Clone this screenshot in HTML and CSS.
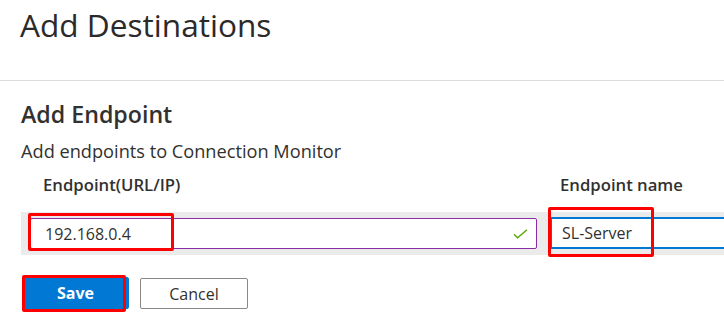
FILE: index.html
```html
<!DOCTYPE html>
<html>
<head>
<meta charset="utf-8">
<link rel="stylesheet" href="styles.css">
</head>
<body>
<header class="header">
  <h1 class="title">Add Destinations</h1>
</header>
<main class="section">
  <h2 class="subtitle">Add Endpoint</h2>
  <p class="desc">Add endpoints to Connection Monitor</p>
  <div class="grid labels">
    <div class="label label-url">Endpoint(URL/IP)</div>
    <div class="label label-name">Endpoint name</div>
  </div>
  <div class="band">
    <div class="grid">
      <div class="input input-url">
        <span class="value">192.168.0.4</span>
        <svg class="check" width="15" height="10" viewBox="0 0 15 10"><path d="M1 5.2 L4.6 8.8 L14 0.8" fill="none" stroke="#57a300" stroke-width="1.3"/></svg>
        <div class="mark mark-url"></div>
      </div>
      <div class="input input-name">
        <span class="value">SL-Server</span>
        <div class="mark mark-name"></div>
      </div>
    </div>
  </div>
  <div class="actions">
    <button class="btn btn-primary">Save<span class="mark mark-save"></span></button>
    <button class="btn btn-default">Cancel</button>
  </div>
</main>
</body>
</html>
```
FILE: styles.css
```css
* { box-sizing: border-box; }
html, body { margin: 0; padding: 0; background: #fff; }
body {
  font-family: "Open Sans", "Noto Sans", sans-serif;
  color: #323130;
  width: 724px;
  height: 321px;
  overflow: hidden;
}
.header {
  height: 81px;
  border-bottom: 1px solid #dcdcdc;
  padding: 5px 0 0 20px;
}
.title {
  margin: 0;
  font-size: 31.6px;
  font-weight: 500;
  line-height: 40px;
  color: #2b2a29;
}
.subtitle {
  margin: 18px 0 0 21px;
  font-size: 23.2px;
  font-weight: 600;
  line-height: 30px;
  color: #323130;
}
.desc {
  margin: 10px 0 0 21px;
  font-size: 18.2px;
  line-height: 24px;
  color: #323130;
}
.grid {
  display: grid;
  grid-template-columns: 507px 1fr;
  column-gap: 13px;
}
.labels {
  margin: 11px 0 0 30px;
}
.label {
  font-size: 16.7px;
  font-weight: 600;
  line-height: 22px;
  color: #323130;
}
.label-url { padding-left: 13px; }
.label-name { padding-left: 10px; }
.band {
  margin: 16px 0 0 21px;
  height: 43px;
  background: #ebebeb;
  padding: 6px 0 0 9px;
}
.input {
  position: relative;
  height: 31px;
  background: #fff;
  display: flex;
  align-items: center;
}
.input-url {
  border: 1px solid #8a2da5;
  border-radius: 2px;
  padding-left: 14px;
}
.input-name {
  border: 2px solid #0078d4;
  border-right: none;
  border-radius: 2px 0 0 2px;
  height: 32px;
  margin-top: -1px;
  padding-left: 10px;
}
.value {
  font-size: 16px;
  color: #323130;
}
.check {
  position: absolute;
  right: 8px;
  top: 10px;
}
.mark {
  position: absolute;
  border: 3px solid #f00;
  border-radius: 2px;
  pointer-events: none;
}
.mark-url {
  left: -3px;
  top: -6px;
  width: 146px;
  height: 38px;
}
.mark-name {
  left: -4px;
  top: -12px;
  width: 106px;
  height: 50px;
}
.actions {
  display: flex;
  gap: 11px;
  margin: 22px 0 0 22px;
}
.btn {
  position: relative;
  height: 32px;
  border-radius: 2px;
  font-family: "Open Sans", "Noto Sans", sans-serif;
  font-size: 16px;
  padding: 0;
  cursor: pointer;
}
.btn-primary {
  width: 107px;
  background: #0078d4;
  border: 1px solid #0078d4;
  color: #fff;
  font-weight: 700;
}
.btn-default {
  width: 108px;
  background: #fff;
  border: 1px solid #8a8886;
  color: #323130;
  font-weight: 400;
  margin-top: 1px;
  height: 31px;
}
.mark-save {
  left: -1px;
  top: -3px;
  width: 104px;
  height: 37px;
}
```
